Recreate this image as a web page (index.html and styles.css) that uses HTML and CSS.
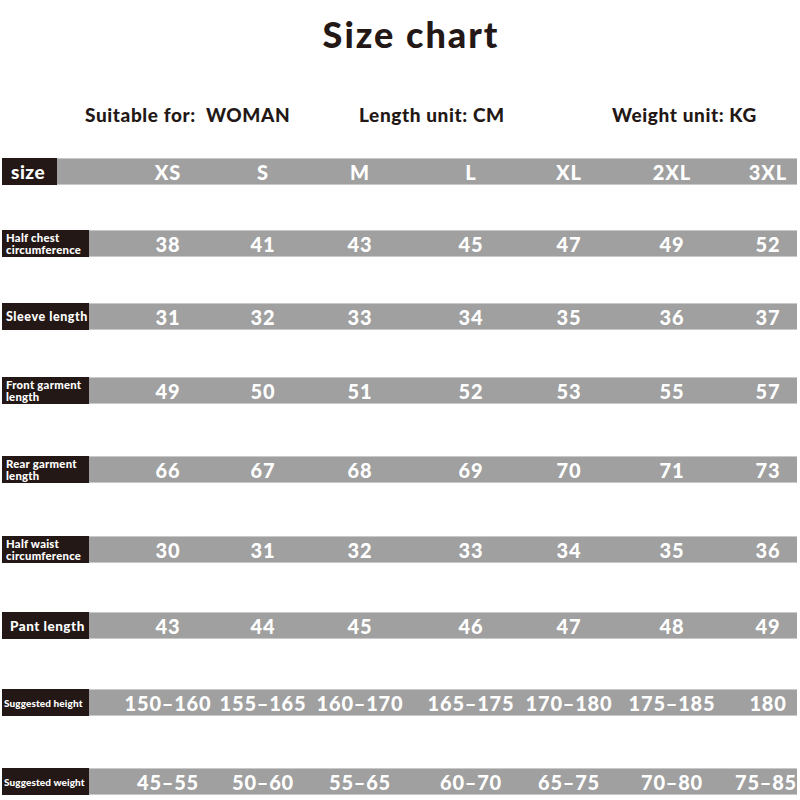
FILE: index.html
```html
<!DOCTYPE html>
<html lang="en">
<head>
<meta charset="utf-8">
<title>Size chart</title>
<link rel="stylesheet" href="styles.css">
</head>
<body>
<div class="page">
  <h1 class="title">Size chart</h1>
  <div class="info">
    <span class="info-item info-suit">Suitable for:&nbsp; WOMAN</span>
    <span class="info-item info-len">Length unit: CM</span>
    <span class="info-item info-wt">Weight unit: KG</span>
  </div>
  <div class="chart">
    <div class="row row-head">
      <div class="label label-head">size</div>
      <div class="cell c1">XS</div><div class="cell c2">S</div><div class="cell c3">M</div><div class="cell c4">L</div><div class="cell c5">XL</div><div class="cell c6">2XL</div><div class="cell c7">3XL</div>
    </div>
    <div class="row">
      <div class="label label-two">Half chest<br>circumference</div>
      <div class="cell c1">38</div><div class="cell c2">41</div><div class="cell c3">43</div><div class="cell c4">45</div><div class="cell c5">47</div><div class="cell c6">49</div><div class="cell c7">52</div>
    </div>
    <div class="row">
      <div class="label label-one">Sleeve length</div>
      <div class="cell c1">31</div><div class="cell c2">32</div><div class="cell c3">33</div><div class="cell c4">34</div><div class="cell c5">35</div><div class="cell c6">36</div><div class="cell c7">37</div>
    </div>
    <div class="row">
      <div class="label label-two">Front garment<br>length</div>
      <div class="cell c1">49</div><div class="cell c2">50</div><div class="cell c3">51</div><div class="cell c4">52</div><div class="cell c5">53</div><div class="cell c6">55</div><div class="cell c7">57</div>
    </div>
    <div class="row">
      <div class="label label-two">Rear garment<br>length</div>
      <div class="cell c1">66</div><div class="cell c2">67</div><div class="cell c3">68</div><div class="cell c4">69</div><div class="cell c5">70</div><div class="cell c6">71</div><div class="cell c7">73</div>
    </div>
    <div class="row">
      <div class="label label-two">Half waist<br>circumference</div>
      <div class="cell c1">30</div><div class="cell c2">31</div><div class="cell c3">32</div><div class="cell c4">33</div><div class="cell c5">34</div><div class="cell c6">35</div><div class="cell c7">36</div>
    </div>
    <div class="row">
      <div class="label label-pant">Pant length</div>
      <div class="cell c1">43</div><div class="cell c2">44</div><div class="cell c3">45</div><div class="cell c4">46</div><div class="cell c5">47</div><div class="cell c6">48</div><div class="cell c7">49</div>
    </div>
    <div class="row row-range">
      <div class="label label-small">Suggested height</div>
      <div class="cell c1">150–160</div><div class="cell c2">155–165</div><div class="cell c3">160–170</div><div class="cell c4">165–175</div><div class="cell c5">170–180</div><div class="cell c6">175–185</div><div class="cell c7">180</div>
    </div>
    <div class="row row-range">
      <div class="label label-small">Suggested weight</div>
      <div class="cell c1">45–55</div><div class="cell c2">50–60</div><div class="cell c3">55–65</div><div class="cell c4">60–70</div><div class="cell c5">65–75</div><div class="cell c6">70–80</div><div class="cell c7 c7-range">75–85</div>
    </div>
  </div>
</div>
</body>
</html>
```

FILE: styles.css
```css
html, body {
  margin: 0;
  padding: 0;
  background: #ffffff;
}

.page {
  width: 800px;
  height: 800px;
  overflow: hidden;
  font-family: Lato, "Open Sans", "DejaVu Sans", sans-serif;
  color: #231815;
}

.title {
  margin: 0;
  padding: 12px 0 0 22px;
  height: 46px;
  line-height: 44px;
  font-size: 36px;
  font-weight: 900;
  text-align: center;
  letter-spacing: 2px;
}

.info {
  display: grid;
  grid-template-columns: 359px 253px 1fr;
  margin-top: 46px;
  height: 22px;
  line-height: 22px;
  font-size: 19px;
  font-weight: 900;
  letter-spacing: 0.6px;
}

.info-suit {
  padding-left: 85px;
}

.chart {
  display: flex;
  flex-direction: column;
  margin-top: 32px;
}

.row {
  display: grid;
  grid-template-columns: 87px 32px 94px 96px 98px 124px 72px 134px 58px;
  margin-left: 2px;
  width: 795px;
  height: 25px;
  background: #a0a0a0;
  border-top: 1px solid #c9c9c9;
  border-bottom: 1px solid #c9c9c9;
  color: #ffffff;
}

.row-head {
  grid-template-columns: 55px 64px 94px 96px 98px 124px 72px 134px 58px;
}

.row:nth-child(2) { margin-top: 45px; }
.row:nth-child(3) { margin-top: 46px; }
.row:nth-child(4) { margin-top: 47px; }
.row:nth-child(5) { margin-top: 52px; }
.row:nth-child(6) { margin-top: 53px; }
.row:nth-child(7) { margin-top: 49px; }
.row:nth-child(8) { margin-top: 50px; }
.row:nth-child(9) { margin-top: 52px; }

.label {
  grid-column: 1;
  background: #231815;
  color: #ffffff;
  font-weight: 900;
  display: flex;
  align-items: center;
  padding-left: 4px;
  white-space: nowrap;
  overflow: hidden;
  margin: -1px 0;
}

.label-head {
  font-size: 19px;
  padding-left: 9px;
  letter-spacing: 0.5px;
}

.label-two {
  font-size: 11.3px;
  line-height: 12px;
  letter-spacing: 0.25px;
  padding-left: 4px;
}

.label-one {
  font-size: 12.5px;
  letter-spacing: 0.55px;
  padding-left: 4px;
}

.label-pant {
  font-size: 13.5px;
  letter-spacing: 0.5px;
  padding-left: 8px;
}

.label-small {
  font-size: 10px;
  letter-spacing: 0.1px;
  padding-left: 2px;
}

.cell {
  display: flex;
  justify-content: center;
  align-items: center;
  white-space: nowrap;
  font-size: 20px;
  font-weight: 900;
  letter-spacing: 1px;
}

.row-range .cell {
  letter-spacing: 0.8px;
}

.c7-range {
  padding-right: 4px;
}

.c1 { grid-column: 3; }
.c2 { grid-column: 4; }
.c3 { grid-column: 5; }
.c4 { grid-column: 6; }
.c5 { grid-column: 7; }
.c6 { grid-column: 8; }
.c7 { grid-column: 9; }
```
